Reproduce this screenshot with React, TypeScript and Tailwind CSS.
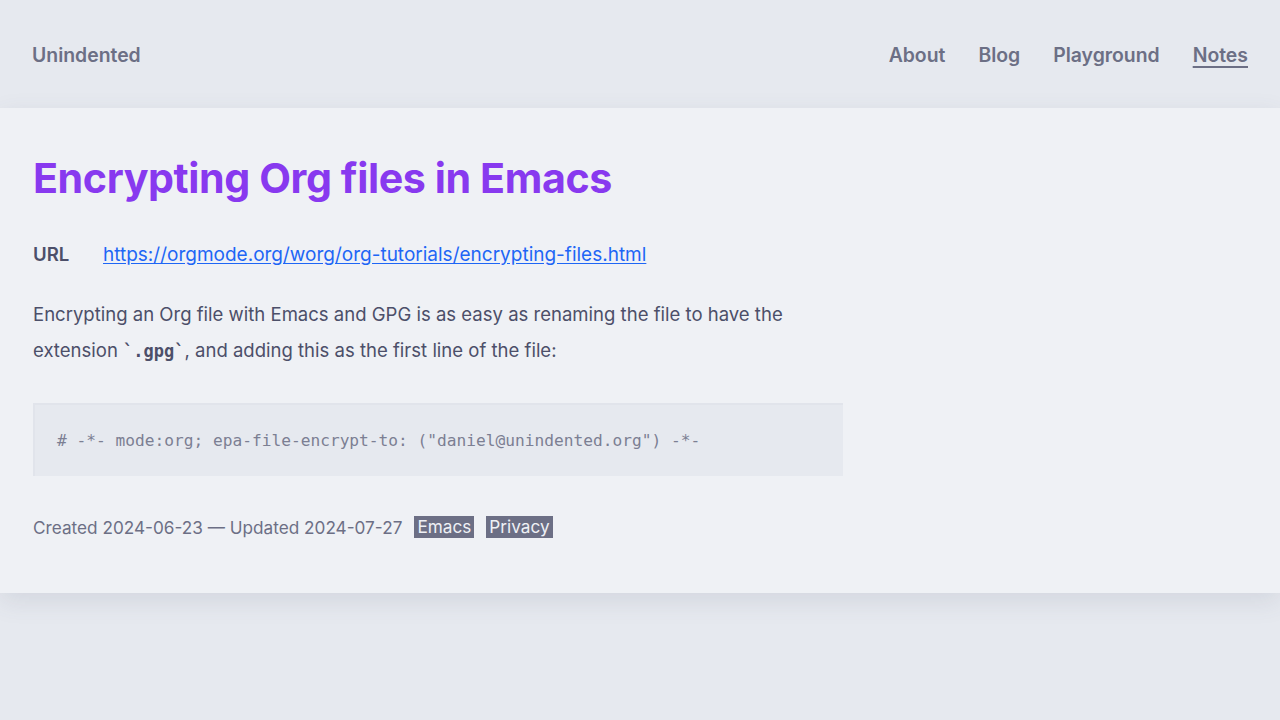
import React from 'react';

const navLinks = [
  { label: 'About', active: false },
  { label: 'Blog', active: false },
  { label: 'Playground', active: false },
  { label: 'Notes', active: true },
];

const tags = ['Emacs', 'Privacy'];

export default function App() {
  return (
    <div className="min-h-[720px] bg-[#e6e9ef] font-['Inter',sans-serif] text-[#4c4f69]">
      {/* Header */}
      <header className="h-[108px] px-8 pt-[4px] flex items-center justify-between">
        <a href="#" className="text-[19.4px] font-semibold text-[#6c6f85]">
          Unindented
        </a>
        <nav className="flex items-center gap-[33px]">
          {navLinks.map((link) => (
            <a
              key={link.label}
              href="#"
              className={`text-[19.4px] font-semibold text-[#6c6f85] ${
                link.active ? 'underline underline-offset-4 decoration-2' : ''
              }`}
            >
              {link.label}
            </a>
          ))}
        </nav>
      </header>

      {/* Main */}
      <main className="bg-[#eff1f5] shadow-[0_8px_24px_rgba(76,79,105,0.12)] px-[33px] pt-[44px] pb-[53px]">
        <article className="max-w-[810px]">
          <h1 className="text-[41.2px] leading-[1.3] font-bold text-[#8839ef] tracking-[-0.01em]">
            Encrypting Org files in Emacs
          </h1>

          <dl className="mt-[30px] flex items-center text-[18.6px] leading-[36px]">
            <dt className="w-[70px] font-semibold">URL</dt>
            <dd>
              <a
                href="#"
                className="text-[#1e66f5] text-[19px] underline underline-offset-2"
              >
                https://orgmode.org/worg/org-tutorials/encrypting-files.html
              </a>
            </dd>
          </dl>

          <p className="mt-[23px] text-[18.55px] leading-[36px]">
            Encrypting an Org file with Emacs and GPG is as easy as renaming the file to have the
            extension{' '}
            <code className="font-['DejaVu_Sans_Mono',monospace] text-[17px] font-bold">
              `.gpg`
            </code>
            , and adding this as the first line of the file:
          </p>

          <pre className="mt-[34px] bg-[#e6e9ef] border-t-2 border-l-2 border-[#e1e4eb] px-[22px] pt-[25px] pb-[24px] font-['DejaVu_Sans_Mono',monospace] text-[16.2px] leading-[22px] text-[#7c7f93]">
            # -*- mode:org; epa-file-encrypt-to: ("daniel@unindented.org") -*-
          </pre>

          <footer className="mt-[39px] flex items-center text-[17.2px] text-[#6c6f85]">
            <span>Created 2024-06-23 — Updated 2024-07-27</span>
            {tags.map((tag) => (
              <span
                key={tag}
                className="ml-3 bg-[#6c6f85] text-[#eff1f5] px-[3px] leading-[22px]"
              >
                {tag}
              </span>
            ))}
          </footer>
        </article>
      </main>
    </div>
  );
}
